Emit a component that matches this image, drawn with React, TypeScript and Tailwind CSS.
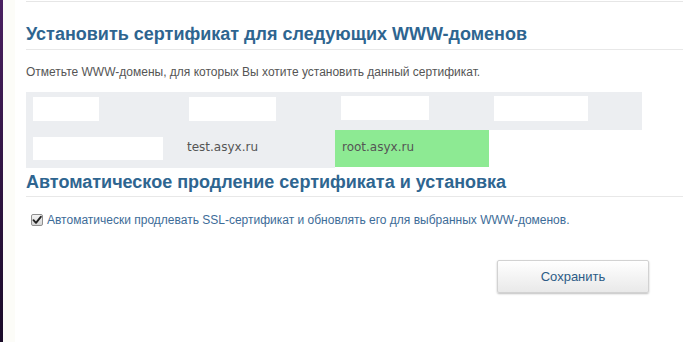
import React from "react";

const Redact = ({ w, h, ml, mt }: { w: number; h: number; ml: number; mt: number }) => (
  <div className="bg-white" style={{ width: w, height: h, marginLeft: ml, marginTop: mt }} />
);

export default function App() {
  return (
    <div className="w-[683px] h-[342px] flex bg-white overflow-hidden" style={{ fontFamily: '"Liberation Sans", Arial, sans-serif' }}>
      <div className="w-[3px] h-full bg-gradient-to-b from-[#4a2060] to-[#1a0b28]" />
      <div className="w-[12px] h-full bg-[#fcfcf8]" />
      <div className="flex-1 flex flex-col pl-[11px]">
        <div className="h-[2px] border-b border-[#e6e6e6]" />
        <h2 className="mt-[21px] text-[18px] leading-[22px] font-bold text-[#2e6590] pb-[4px] border-b border-[#e8e8e8]">
          Установить сертификат для следующих WWW-доменов
        </h2>
        <p className="mt-[15px] text-[12px] leading-[14px] text-[#555]">
          Отметьте WWW-домены, для которых Вы хотите установить данный сертификат.
        </p>
        <div className="mt-[13px] w-[616px] flex flex-col" style={{ fontFamily: '"DejaVu Sans", Verdana, sans-serif' }}>
          <div className="flex h-[38px] bg-[#eceef1]">
            <div className="w-[154px]"><Redact w={66} h={24} ml={7} mt={5} /></div>
            <div className="w-[155px]"><Redact w={87} h={24} ml={9} mt={5} /></div>
            <div className="w-[154px]"><Redact w={88} h={24} ml={6} mt={4} /></div>
            <div className="w-[153px]"><Redact w={94} h={25} ml={5} mt={4} /></div>
          </div>
          <div className="flex h-[38px]">
            <div className="w-[154px] bg-[#eceef1]"><Redact w={130} h={23} ml={7} mt={7} /></div>
            <div className="w-[155px] bg-[#eceef1] flex items-center pl-[7px] pb-[4px] text-[12px] text-[#555]">test.asyx.ru</div>
            <div className="w-[154px] h-[37px] bg-[#8dea93] flex items-center pl-[7px] pb-[4px] text-[12px] text-[#555]">root.asyx.ru</div>
          </div>
        </div>
        <h2 className="mt-[3px] text-[18px] leading-[22px] font-bold text-[#2e6590] pb-[3px] border-b border-[#e8e8e8]">
          Автоматическое продление сертификата и установка
        </h2>
        <label className="mt-[16px] flex items-center pl-[5px] text-[12px] leading-[14px] text-[#3d6c98]">
          <span className="w-[12px] h-[12px] border border-[#8f8f8f] rounded-[2px] bg-gradient-to-b from-[#f4f4f4] to-[#d6d6d6] flex items-center justify-center">
            <svg width="10" height="10" viewBox="0 0 10 10">
              <path d="M1.5 5.2 L4 7.8 L8.8 1.8" stroke="#222" strokeWidth="1.9" fill="none" strokeLinecap="round" strokeLinejoin="round" />
            </svg>
          </span>
          <span className="ml-[4px]">Автоматически продлевать SSL-сертификат и обновлять его для выбранных WWW-доменов.</span>
        </label>
        <div className="flex justify-end pr-[34px] mt-[33px]">
          <button className="w-[152px] h-[33px] border border-[#d2d2d2] rounded-[2px] bg-gradient-to-b from-[#ffffff] to-[#e9e9e9] shadow-[0_1px_2px_rgba(0,0,0,0.25)] text-[13px] text-[#2c5b86]">
            Сохранить
          </button>
        </div>
      </div>
    </div>
  );
}
